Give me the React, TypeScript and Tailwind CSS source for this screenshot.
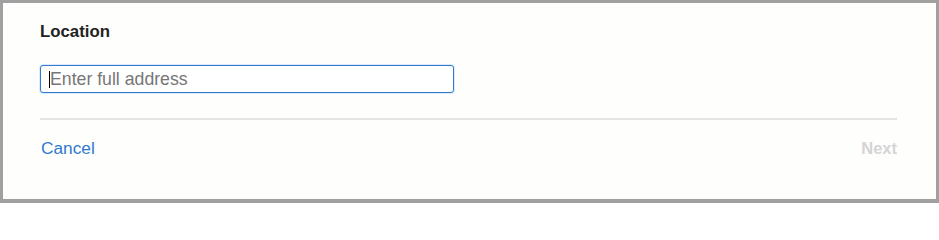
import React from "react";

export default function App() {
  return (
    <div className="w-[939px] h-[203px] border-[#a0a0a0] border-t-[3px] border-l-[3px] border-r-[3px] border-b-[4px] bg-[#fefefd] font-['Liberation_Sans',Arial,sans-serif] box-border">
      <div className="pl-[37px] pr-[39px] pt-[18px]">
        <div className="text-[16.8px] leading-[22px] font-semibold text-[#222222]">Location</div>
        <div className="relative mt-[22px] w-[414px] h-[28px] rounded-[3px] border border-[#2f7bd1] shadow-[0_0_0_1px_rgba(120,180,240,0.25)] bg-white">
          <input
            className="w-full h-full bg-transparent outline-none pl-[9px] text-[17.7px] text-[#222] placeholder:text-[#767676] caret-transparent"
            placeholder="Enter full address"
          />
          <span className="absolute left-[8px] top-[5px] w-px h-[17px] bg-black" />
        </div>
        <div className="mt-[25px] h-[2px] bg-[#e4e4e4]" />
        <div className="flex justify-between items-center mt-[17px]">
          <button className="pl-px text-[17.3px] leading-[22px] text-[#2f7ad0]">Cancel</button>
          <button className="text-[16.5px] leading-[22px] font-bold text-[#d4d4d4]">Next</button>
        </div>
      </div>
    </div>
  );
}
